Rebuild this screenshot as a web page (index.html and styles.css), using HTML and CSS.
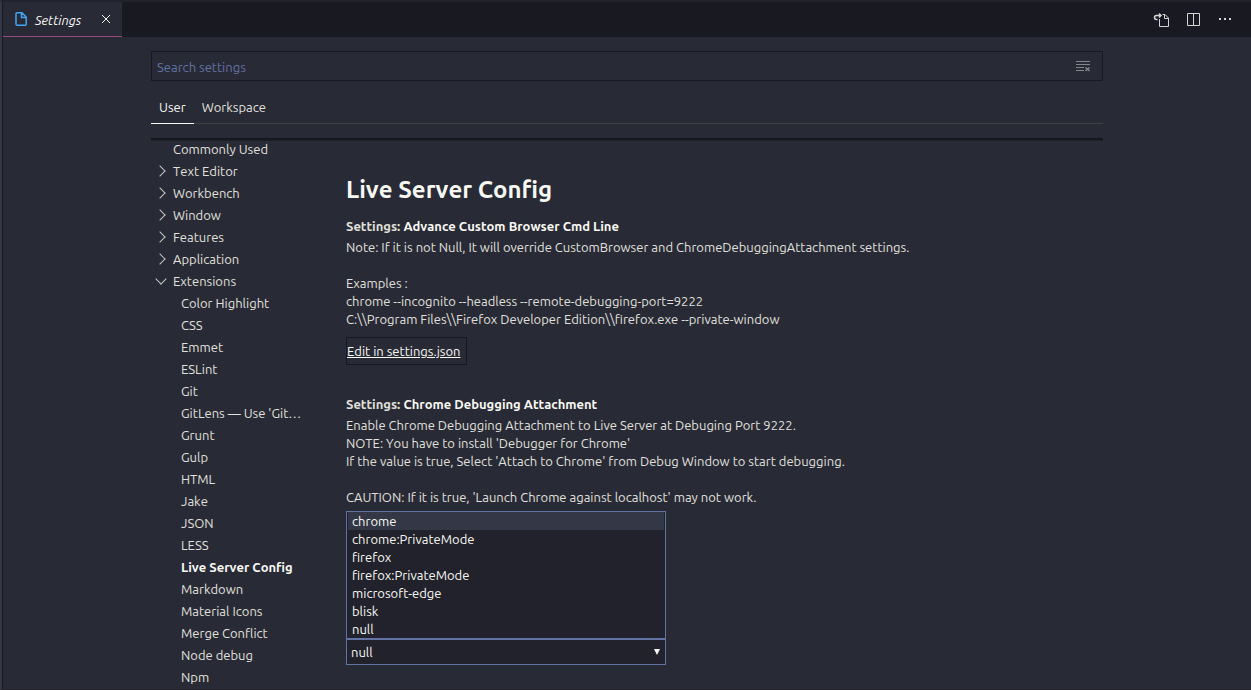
FILE: index.html
```html
<!DOCTYPE html>
<html lang="en">
<head>
<meta charset="utf-8">
<meta name="viewport" content="width=device-width, initial-scale=1">
<title>Settings</title>
<link rel="stylesheet" href="styles.css">
</head>
<body>
<div class="editor">
  <header class="tab-bar">
    <div class="tab">
      <svg class="file-icon" width="12" height="14" viewBox="0 0 12 14" aria-hidden="true"><path d="M2 .75h5L11.200 5v7.200q0 1-1 1h-8q-1.200 0-1.200-1V1.750q0-1 1-1zM6.500 1v4.500H11"/></svg>
      <span class="tab-label">Settings</span>
      <button class="icon-button tab-close" aria-label="Close"><svg width="10" height="10" viewBox="0 0 10 10"><path d="M1 1l8 8M9 1L1 9"/></svg></button>
    </div>
    <div class="actions">
      <button class="icon-button" aria-label="Open Settings (JSON)"><svg width="16" height="16" viewBox="0 0 16 16"><path d="M6.500 7v7.500h9V6L12 2.500H9.500M11.500 2.500v4h4"/><path class="bold" d="M4.500 7.500h-1a1.500 1.500 0 0 1 0-4h4M6 1.500l2 2-2 2"/></svg></button>
      <button class="icon-button" aria-label="Split Editor"><svg width="16" height="16" viewBox="0 0 16 16"><path d="M2.500 1.500h12v12h-12zM8.500 1.500v12"/></svg></button>
      <button class="icon-button" aria-label="More Actions"><svg class="solid" width="16" height="16" viewBox="0 0 16 16"><path d="M2 6h2v2H2zM7 6h2v2H7zM12 6h2v2h-2z"/></svg></button>
    </div>
  </header>
  <main class="settings">
    <div class="search">
      <input class="search-input" type="text" placeholder="Search settings" aria-label="Search settings">
      <button class="icon-button clear" aria-label="Clear Settings Search Input"><svg width="16" height="16" viewBox="0 0 16 16"><path d="M1 3.500h14M1 6.500h14M1 9.500h8M1 12.500h8"/><path class="bold" d="M10.500 9.500l4 3.500M14.500 9.500l-4 3.500"/></svg></button>
    </div>
    <div class="scopes" role="tablist">
      <button class="scope scope-active" role="tab" aria-selected="true">User</button>
      <button class="scope" role="tab" aria-selected="false">Workspace</button>
    </div>
    <div class="body">
      <nav class="toc" aria-label="Settings categories">
        <a class="toc-row" href="#">Commonly Used</a>
        <a class="toc-row parent" href="#">Text Editor</a>
        <a class="toc-row parent" href="#">Workbench</a>
        <a class="toc-row parent" href="#">Window</a>
        <a class="toc-row parent" href="#">Features</a>
        <a class="toc-row parent" href="#">Application</a>
        <a class="toc-row parent open" href="#">Extensions</a>
        <a class="toc-row child" href="#">Color Highlight</a>
        <a class="toc-row child" href="#">CSS</a>
        <a class="toc-row child" href="#">Emmet</a>
        <a class="toc-row child" href="#">ESLint</a>
        <a class="toc-row child" href="#">Git</a>
        <a class="toc-row child" href="#">GitLens — Use 'Git…</a>
        <a class="toc-row child" href="#">Grunt</a>
        <a class="toc-row child" href="#">Gulp</a>
        <a class="toc-row child" href="#">HTML</a>
        <a class="toc-row child" href="#">Jake</a>
        <a class="toc-row child" href="#">JSON</a>
        <a class="toc-row child" href="#">LESS</a>
        <a class="toc-row child current" href="#">Live Server Config</a>
        <a class="toc-row child" href="#">Markdown</a>
        <a class="toc-row child" href="#">Material Icons</a>
        <a class="toc-row child" href="#">Merge Conflict</a>
        <a class="toc-row child" href="#">Node debug</a>
        <a class="toc-row child" href="#">Npm</a>
      </nav>
      <section class="content">
        <h1 class="group-title">Live Server Config</h1>
        <article class="setting">
          <h2 class="setting-title"><span class="category">Settings:</span> Advance Custom Browser Cmd Line</h2>
          <p class="description">Note: If it is not Null, It will override CustomBrowser and ChromeDebuggingAttachment settings.<br><br>Examples :<br>chrome --incognito --headless --remote-debugging-port=9222<br>C:\\Program Files\\Firefox Developer Edition\\firefox.exe --private-window</p>
          <button class="edit-button">Edit in settings.json</button>
        </article>
        <article class="setting">
          <h2 class="setting-title"><span class="category">Settings:</span> Chrome Debugging Attachment</h2>
          <p class="description">Enable Chrome Debugging Attachment to Live Server at Debuging Port 9222.<br>NOTE: You have to install 'Debugger for Chrome'<br>If the value is true, Select 'Attach to Chrome' from Debug Window to start debugging.<br><br>CAUTION: If it is true, 'Launch Chrome against localhost' may not work.</p>
        </article>
        <div class="browser-setting">
          <ul class="options" role="listbox" aria-label="Custom browser options">
            <li class="option option-focused" role="option">chrome</li>
            <li class="option" role="option">chrome:PrivateMode</li>
            <li class="option" role="option">firefox</li>
            <li class="option" role="option">firefox:PrivateMode</li>
            <li class="option" role="option">microsoft-edge</li>
            <li class="option" role="option">blisk</li>
            <li class="option" role="option" aria-selected="true">null</li>
          </ul>
          <select class="browser-select" aria-label="Custom browser"><option>null</option></select>
          <svg class="select-arrow" width="6" height="6" viewBox="0 0 6 6" aria-hidden="true"><path d="M0 0h6L3 6z"/></svg>
        </div>
      </section>
    </div>
  </main>
</div>
</body>
</html>
```
FILE: styles.css
```css
* { box-sizing: border-box; }
body {
  margin: 0;
  background: #282a36;
  color: #f8f8f2;
  font: 13px/18px Ubuntu, "Noto Sans", sans-serif;
  font-kerning: none;
}
button, input, select { font: inherit; font-kerning: inherit; color: inherit; }
.editor {
  height: 100vh;
  display: flex;
  flex-direction: column;
  overflow: hidden;
  border-top: 2px solid #21222c;
  border-left: 2px solid #343746;
  border-bottom: 1px solid #21222c;
}
.tab-bar {
  display: flex;
  flex: none;
  justify-content: space-between;
  height: 35px;
  background: #191a21;
  border-left: 1px solid #191a21;
}
.tab {
  display: flex;
  align-items: center;
  gap: 8px;
  width: 119px;
  padding: 0 11px 0 12px;
  background: #282a36;
  border-bottom: 1px solid #944b7e;
}
.file-icon { fill: none; stroke: #42a5f5; stroke-width: 1.5; }
.tab-label { flex: 1; padding-top: 1px; font-style: italic; }
.icon-button {
  display: flex;
  padding: 0;
  border: 0;
  background: none;
}
.icon-button svg { fill: none; stroke: #d4d4d4; }
.tab-close svg { stroke: #f8f8f2; }
.icon-button .bold { stroke-width: 1.5; }
.icon-button .solid { fill: #d4d4d4; stroke: none; }
.actions { display: flex; align-items: center; gap: 16px; padding-right: 18px; }
.settings {
  display: flex;
  flex: 1;
  flex-direction: column;
  min-height: 0;
  border-left: 1px solid #191a21;
  padding: 14px 24px 0;
}
.search, .scopes, .body { width: 100%; max-width: 952px; margin: 0 auto; }
.search {
  display: flex;
  flex: none;
  align-items: center;
  height: 30px;
  padding-right: 11px;
  border: 1px solid #191a21;
}
.search-input {
  flex: 1;
  padding: 6px 5px 4px;
  border: 0;
  outline: 0;
  background: none;
}
.search-input::placeholder { color: #6272a4; opacity: 1; }
.clear svg { stroke: #85868b; }
.scopes {
  display: flex;
  flex: none;
  height: 43px;
  padding-top: 11px;
  border-bottom: 1px solid #404145;
}
.scope {
  height: 32px;
  padding: 0 8px 2px;
  border: 0;
  border-bottom: 1px solid transparent;
  background: none;
  color: #e0e0dc;
}
.scope-active { color: #f8f8f2; border-color: #f8f8f2; }
.body {
  display: flex;
  flex: 1;
  min-height: 0;
  margin-top: 14px;
  background: linear-gradient(#15161b, #15161b 1px, #20222b 3px, transparent 3px);
}
.toc { flex: none; width: 195px; }
.toc-row {
  display: flex;
  align-items: center;
  height: 22px;
  padding-left: 22px;
  color: #e0e0dc;
  text-decoration: none;
  white-space: nowrap;
}
.parent { padding-left: 7px; }
.parent::before {
  content: "";
  width: 7px;
  height: 7px;
  margin-right: 9px;
  margin-left: -2px;
  border: solid #c5c5c5;
  border-width: 1px 1px 0 0;
  transform: rotate(45deg);
}
.open::before { margin-right: 8px; margin-bottom: 4px; margin-left: -1px; transform: rotate(135deg); }
.child { padding-left: 30px; }
.current { color: #f8f8f2; font-weight: 700; }
.content { flex: 1; min-width: 0; padding-top: 37px; }
.group-title { margin: 0 0 11px; font-size: 24px; line-height: 30px; }
.setting { height: 178px; }
.setting-title { margin: 0 0 3px; padding-top: 1px; font-size: 13px; line-height: 18px; }
.category { color: #e0e0dc; }
.description { margin: 0; color: #e0e0dc; }
.edit-button {
  display: block;
  height: 28px;
  margin-top: 9px;
  padding: 0 6px 0 0;
  border: 1px solid #191a21;
  background: none;
  text-decoration: underline;
}
.browser-setting { position: relative; width: 320px; margin-top: 67px; }
.browser-select {
  display: block;
  width: 100%;
  height: 26px;
  padding: 0 4px;
  appearance: none;
  border: 1px solid #6272a4;
  border-radius: 0;
  background: #21222c;
}
.select-arrow { position: absolute; right: 6px; top: 10px; fill: #f8f8f2; }
.options {
  position: absolute;
  right: 0;
  bottom: 100%;
  left: 0;
  margin: 0;
  padding: 0 1px;
  list-style: none;
  border: 1px solid #6272a4;
  background: #21222c;
}
.option { height: 18px; padding-left: 4px; }
.option-focused { background: #343746; }
```
